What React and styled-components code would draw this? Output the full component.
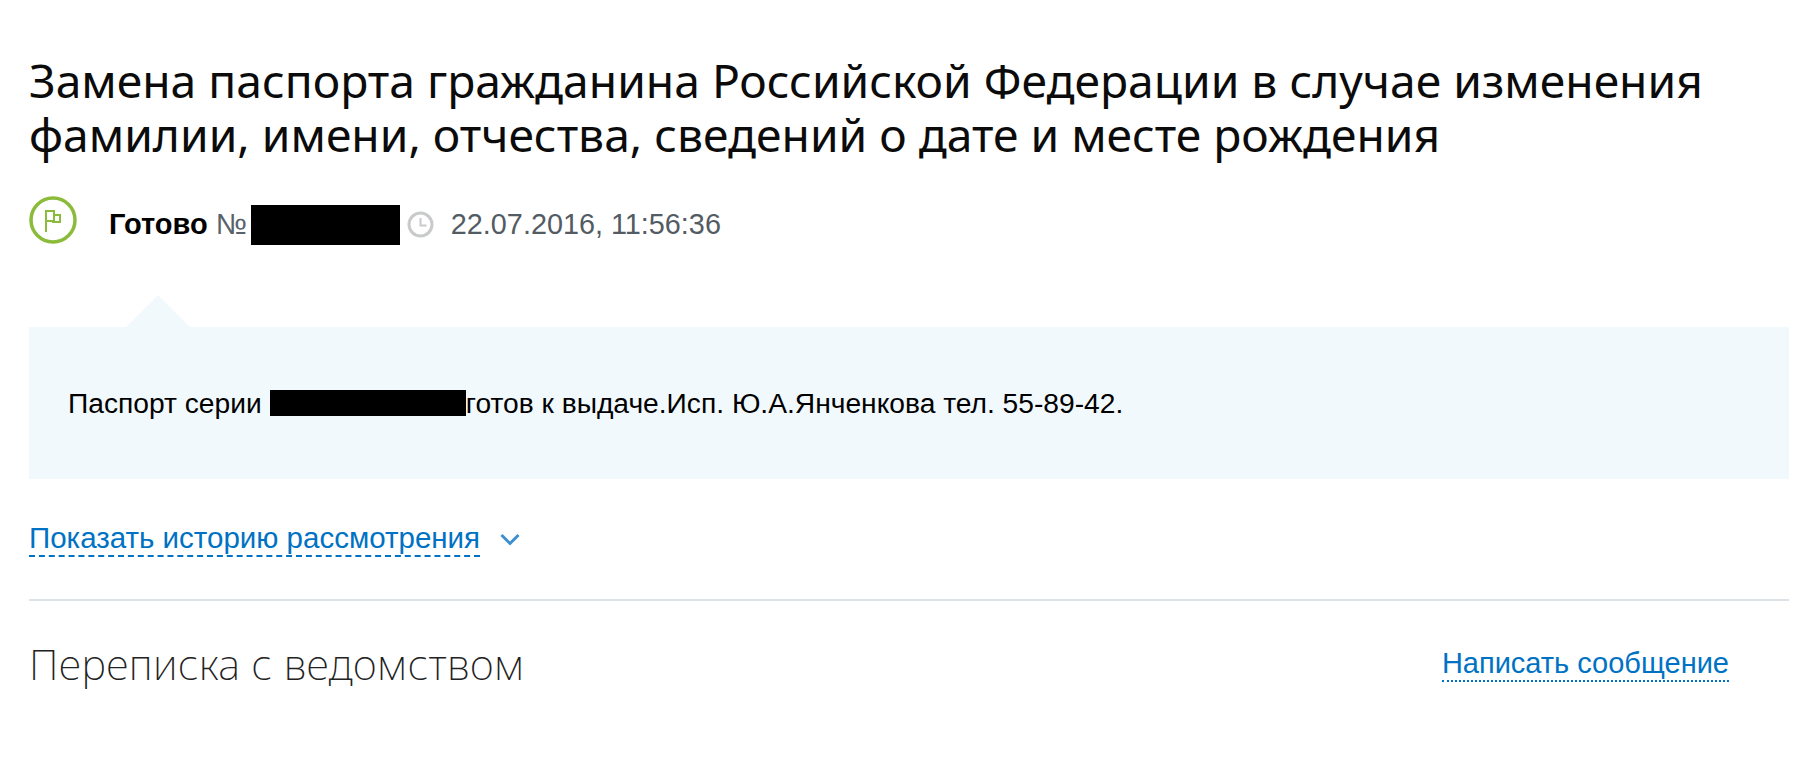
import React from "react";
import styled, { createGlobalStyle } from "styled-components";

const GlobalStyle = createGlobalStyle`
  html, body {
    margin: 0;
    padding: 0;
    background: #fff;
  }
  body {
    font-family: "Liberation Sans", Arial, sans-serif;
    color: #000;
  }
`;

const Page = styled.div`
  padding: 54px 29px 0;
`;

const Title = styled.h1`
  margin: 0;
  font-family: "Noto Sans", sans-serif;
  font-weight: 400;
  font-size: 46.2px;
  line-height: 54px;
  color: #0b0b0b;
`;

const StatusRow = styled.div`
  display: flex;
  align-items: center;
  margin-top: 34px;
  font-size: 29px;
`;

const StatusIcon = styled.svg`
  width: 48px;
  height: 48px;
  flex: none;
  margin: 0 32px 9px 0;
`;

const StatusLabel = styled.b`
  margin-right: 8px;
`;

const NumberSign = styled.span`
  color: #59626b;
  margin-right: 4px;
`;

const Redacted = styled.span`
  display: inline-block;
  flex: none;
  background: #000;
  width: ${({ $w }) => $w}px;
  height: ${({ $h }) => $h}px;
`;

const ClockIcon = styled.svg`
  width: 27px;
  height: 27px;
  margin: 0 17px 0 7px;
`;

const DateText = styled.span`
  color: #535b63;
  font-size: 28.8px;
`;

const Panel = styled.div`
  position: relative;
  display: flex;
  align-items: center;
  height: 152px;
  margin-top: 74px;
  padding-left: 39px;
  background: #f2f9fd;
  font-size: 28.2px;

  &::before {
    content: "";
    position: absolute;
    left: 97px;
    top: -32px;
    border-left: 32px solid transparent;
    border-right: 32px solid transparent;
    border-bottom: 32px solid #f2f9fd;
  }
`;

const PanelGap = styled.span`
  width: 8px;
`;

const HistoryRow = styled.div`
  display: flex;
  align-items: center;
  margin-top: 42px;
`;

const DashedLink = styled.a`
  font-size: 29.5px;
  line-height: 34px;
  color: #0072c4;
  border-bottom: 2px dashed #0072c4;
  cursor: pointer;
`;

const Chevron = styled.svg`
  width: 20px;
  height: 14px;
  margin: 2px 0 0 20px;
`;

const Divider = styled.hr`
  margin: 42px 0 0;
  border: 0;
  height: 2px;
  background: #dde2e6;
`;

const CorrespondenceRow = styled.div`
  display: flex;
  justify-content: space-between;
  align-items: flex-start;
  margin-top: 38px;
  padding-right: 60px;
`;

const SectionTitle = styled.h2`
  margin: 0;
  font-family: "Noto Sans", sans-serif;
  font-weight: 200;
  font-size: 41.8px;
  line-height: 50px;
  letter-spacing: 0.42px;
  color: #222;
`;

const DottedLink = styled.a`
  margin-top: 7px;
  font-size: 29px;
  line-height: 34px;
  color: #0072c4;
  border-bottom: 2px dotted #0072c4;
  cursor: pointer;
`;

export default function App() {
  return (
    <Page>
      <GlobalStyle />
      <Title>
        Замена паспорта гражданина Российской Федерации в случае изменения
        <br />
        фамилии, имени, отчества, сведений о дате и месте рождения
      </Title>
      <StatusRow>
        <StatusIcon viewBox="0 0 48 48" fill="none">
          <circle cx="24" cy="24" r="22" stroke="#8abb3a" strokeWidth="3.5" />
          <path d="M17 14v22M17 15h8v10h-8M25 19h6v7h-8" stroke="#8abb3a" strokeWidth="2" />
        </StatusIcon>
        <StatusLabel>Готово</StatusLabel>
        <NumberSign>№</NumberSign>
        <Redacted $w={149} $h={40} />
        <ClockIcon viewBox="0 0 27 27" fill="none">
          <circle cx="13.5" cy="13.5" r="11.5" stroke="#c8cacc" strokeWidth="3" />
          <path d="M13.5 7v7.5h6" stroke="#c8cacc" strokeWidth="2" />
        </ClockIcon>
        <DateText>22.07.2016, 11:56:36</DateText>
      </StatusRow>
      <Panel>
        Паспорт серии
        <PanelGap />
        <Redacted $w={196} $h={26} />
        готов к выдаче.Исп. Ю.А.Янченкова тел. 55-89-42.
      </Panel>
      <HistoryRow>
        <DashedLink>Показать историю рассмотрения</DashedLink>
        <Chevron viewBox="0 0 20 14" fill="none">
          <path d="M1.5 2l8.5 8.5L18.5 2" stroke="#3d8fd0" strokeWidth="3" />
        </Chevron>
      </HistoryRow>
      <Divider />
      <CorrespondenceRow>
        <SectionTitle>Переписка с ведомством</SectionTitle>
        <DottedLink>Написать сообщение</DottedLink>
      </CorrespondenceRow>
    </Page>
  );
}
